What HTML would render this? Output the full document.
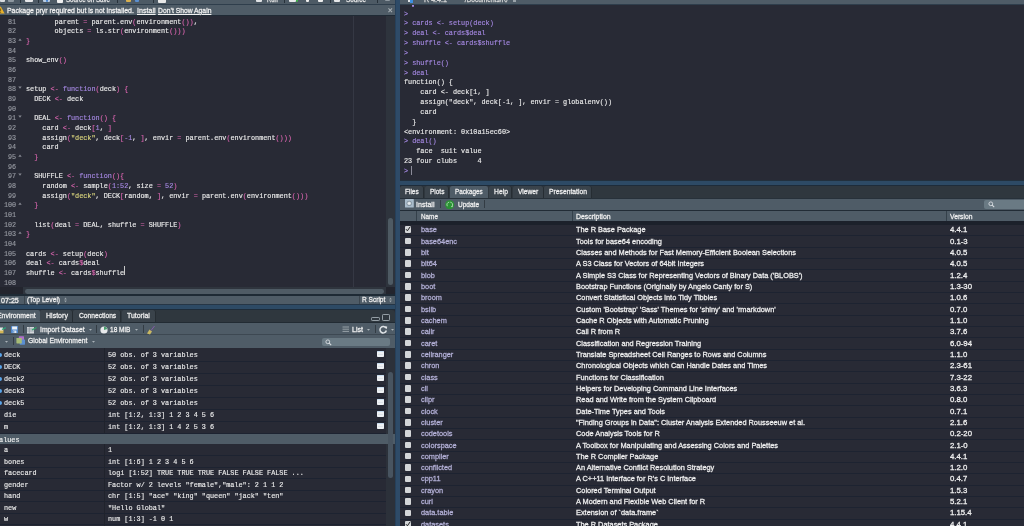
<!DOCTYPE html>
<html><head><meta charset="utf-8"><style>
html,body{margin:0;padding:0}
body{width:1024px;height:526px;overflow:hidden;position:relative;background:#282a35}
div{position:absolute}
.t{height:10px;line-height:10px;white-space:pre;transform-origin:0 0}
.s{-webkit-text-stroke:0.28px currentColor}
.m{-webkit-text-stroke:0.15px currentColor}
.m span{-webkit-text-stroke:0.15px currentColor}
</style></head><body>
<div id="w" style="left:0;top:0;width:1024px;height:526px;will-change:transform">
<div style="left:0.00px;top:0.00px;width:395.00px;height:3.70px;background:#4d5a65;"></div>
<div style="left:0.00px;top:3.70px;width:395.00px;height:1.40px;background:#2f3e4c;"></div>
<div style="left:0.00px;top:5.10px;width:395.00px;height:9.50px;background:#4f5c67;"></div>
<div style="left:0.00px;top:14.60px;width:395.00px;height:1.00px;background:#1f2a35;"></div>
<div style="left:0.00px;top:15.60px;width:395.00px;height:271.50px;background:#282a35;"></div>
<div style="left:353.00px;top:15.60px;width:1.00px;height:271.50px;background:#353844;"></div>
<div style="left:386.00px;top:15.60px;width:9.00px;height:271.50px;background:#2e343d;"></div>
<div style="left:388.00px;top:218.20px;width:5.40px;height:66.50px;background:#4e5a63;border-radius:3px"></div>
<div style="left:0.00px;top:287.10px;width:23.00px;height:7.40px;background:#23252e;"></div>
<div style="left:23.00px;top:287.10px;width:363.00px;height:7.40px;background:#2f353e;"></div>
<div style="left:24.50px;top:288.90px;width:359.00px;height:4.80px;background:#4f5b65;border-radius:2.4px"></div>
<div style="left:386.00px;top:287.10px;width:9.00px;height:7.40px;background:#23252e;"></div>
<div style="left:0.00px;top:294.00px;width:395.00px;height:2.00px;background:#1e2a35;"></div>
<div style="left:0.00px;top:296.00px;width:395.00px;height:8.00px;background:#4f5c67;"></div>
<div style="left:23.50px;top:296.00px;width:0.80px;height:8.00px;background:#3b454e;"></div>
<div style="left:358.50px;top:296.00px;width:0.80px;height:8.00px;background:#3b454e;"></div>
<div style="left:0.00px;top:303.95px;width:395.00px;height:1.00px;background:#263646;"></div>
<div style="left:0.00px;top:304.95px;width:395.00px;height:4.30px;background:#2d4a65;"></div>
<div style="left:0.00px;top:309.20px;width:395.00px;height:0.80px;background:#1e2c3a;"></div>
<div class="t m" style="left:7.80px;top:16.82px;font-family:'Liberation Mono', monospace;font-size:7.8px;color:#979aa2;transform:scaleX(0.8654);">81</div>
<div class="t m" style="left:25.70px;top:16.82px;font-family:'Liberation Mono', monospace;font-size:7.8px;color:#ececec;transform:scaleX(0.8739);">       parent <span style="color:#d865ae">=</span> parent.env<span style="color:#d865ae">(</span>environment<span style="color:#d865ae">(</span><span style="color:#d865ae">)</span><span style="color:#d865ae">)</span>,</div>
<div class="t m" style="left:7.80px;top:26.48px;font-family:'Liberation Mono', monospace;font-size:7.8px;color:#979aa2;transform:scaleX(0.8654);">82</div>
<div class="t m" style="left:25.70px;top:26.48px;font-family:'Liberation Mono', monospace;font-size:7.8px;color:#ececec;transform:scaleX(0.8739);">       objects <span style="color:#d865ae">=</span> ls.str<span style="color:#d865ae">(</span>environment<span style="color:#d865ae">(</span><span style="color:#d865ae">)</span><span style="color:#d865ae">)</span><span style="color:#d865ae">)</span></div>
<div class="t m" style="left:7.80px;top:36.14px;font-family:'Liberation Mono', monospace;font-size:7.8px;color:#979aa2;transform:scaleX(0.8654);">83</div>
<svg style="position:absolute;left:18px;top:38.12px" width="4" height="3" viewBox="0 0 4 3"><path d="M0.3 2.7 L2 0.4 L3.7 2.7Z" fill="#878a93"/></svg>
<div class="t m" style="left:25.70px;top:36.14px;font-family:'Liberation Mono', monospace;font-size:7.8px;color:#ececec;transform:scaleX(0.8739);"><span style="color:#d865ae">}</span></div>
<div class="t m" style="left:7.80px;top:45.80px;font-family:'Liberation Mono', monospace;font-size:7.8px;color:#979aa2;transform:scaleX(0.8654);">84</div>
<div class="t m" style="left:7.80px;top:55.46px;font-family:'Liberation Mono', monospace;font-size:7.8px;color:#979aa2;transform:scaleX(0.8654);">85</div>
<div class="t m" style="left:25.70px;top:55.46px;font-family:'Liberation Mono', monospace;font-size:7.8px;color:#ececec;transform:scaleX(0.8739);">show_env<span style="color:#d865ae">(</span><span style="color:#d865ae">)</span></div>
<div class="t m" style="left:7.80px;top:65.12px;font-family:'Liberation Mono', monospace;font-size:7.8px;color:#979aa2;transform:scaleX(0.8654);">86</div>
<div class="t m" style="left:7.80px;top:74.78px;font-family:'Liberation Mono', monospace;font-size:7.8px;color:#979aa2;transform:scaleX(0.8654);">87</div>
<div class="t m" style="left:7.80px;top:84.44px;font-family:'Liberation Mono', monospace;font-size:7.8px;color:#979aa2;transform:scaleX(0.8654);">88</div>
<svg style="position:absolute;left:18px;top:86.42px" width="4" height="3" viewBox="0 0 4 3"><path d="M0.3 0.4 L2 2.7 L3.7 0.4Z" fill="#878a93"/></svg>
<div class="t m" style="left:25.70px;top:84.44px;font-family:'Liberation Mono', monospace;font-size:7.8px;color:#ececec;transform:scaleX(0.8739);">setup <span style="color:#d865ae">&lt;-</span> <span style="color:#a588e2">function</span><span style="color:#d865ae">(</span>deck<span style="color:#d865ae">)</span> <span style="color:#d865ae">{</span></div>
<div class="t m" style="left:7.80px;top:94.10px;font-family:'Liberation Mono', monospace;font-size:7.8px;color:#979aa2;transform:scaleX(0.8654);">89</div>
<div class="t m" style="left:25.70px;top:94.10px;font-family:'Liberation Mono', monospace;font-size:7.8px;color:#ececec;transform:scaleX(0.8739);">  DECK <span style="color:#d865ae">&lt;-</span> deck</div>
<div class="t m" style="left:7.80px;top:103.76px;font-family:'Liberation Mono', monospace;font-size:7.8px;color:#979aa2;transform:scaleX(0.8654);">90</div>
<div class="t m" style="left:7.80px;top:113.42px;font-family:'Liberation Mono', monospace;font-size:7.8px;color:#979aa2;transform:scaleX(0.8654);">91</div>
<svg style="position:absolute;left:18px;top:115.40px" width="4" height="3" viewBox="0 0 4 3"><path d="M0.3 0.4 L2 2.7 L3.7 0.4Z" fill="#878a93"/></svg>
<div class="t m" style="left:25.70px;top:113.42px;font-family:'Liberation Mono', monospace;font-size:7.8px;color:#ececec;transform:scaleX(0.8739);">  DEAL <span style="color:#d865ae">&lt;-</span> <span style="color:#a588e2">function</span><span style="color:#d865ae">(</span><span style="color:#d865ae">)</span> <span style="color:#d865ae">{</span></div>
<div class="t m" style="left:7.80px;top:123.08px;font-family:'Liberation Mono', monospace;font-size:7.8px;color:#979aa2;transform:scaleX(0.8654);">92</div>
<div class="t m" style="left:25.70px;top:123.08px;font-family:'Liberation Mono', monospace;font-size:7.8px;color:#ececec;transform:scaleX(0.8739);">    card <span style="color:#d865ae">&lt;-</span> deck<span style="color:#d865ae">[</span><span style="color:#a588e2">1</span>, <span style="color:#d865ae">]</span></div>
<div class="t m" style="left:7.80px;top:132.74px;font-family:'Liberation Mono', monospace;font-size:7.8px;color:#979aa2;transform:scaleX(0.8654);">93</div>
<div class="t m" style="left:25.70px;top:132.74px;font-family:'Liberation Mono', monospace;font-size:7.8px;color:#ececec;transform:scaleX(0.8739);">    assign<span style="color:#d865ae">(</span><span style="color:#dcd77e">&quot;deck&quot;</span>, deck<span style="color:#d865ae">[</span><span style="color:#a588e2">-1</span>, <span style="color:#d865ae">]</span>, envir <span style="color:#d865ae">=</span> parent.env<span style="color:#d865ae">(</span>environment<span style="color:#d865ae">(</span><span style="color:#d865ae">)</span><span style="color:#d865ae">)</span><span style="color:#d865ae">)</span></div>
<div class="t m" style="left:7.80px;top:142.40px;font-family:'Liberation Mono', monospace;font-size:7.8px;color:#979aa2;transform:scaleX(0.8654);">94</div>
<div class="t m" style="left:25.70px;top:142.40px;font-family:'Liberation Mono', monospace;font-size:7.8px;color:#ececec;transform:scaleX(0.8739);">    card</div>
<div class="t m" style="left:7.80px;top:152.06px;font-family:'Liberation Mono', monospace;font-size:7.8px;color:#979aa2;transform:scaleX(0.8654);">95</div>
<svg style="position:absolute;left:18px;top:154.04px" width="4" height="3" viewBox="0 0 4 3"><path d="M0.3 2.7 L2 0.4 L3.7 2.7Z" fill="#878a93"/></svg>
<div class="t m" style="left:25.70px;top:152.06px;font-family:'Liberation Mono', monospace;font-size:7.8px;color:#ececec;transform:scaleX(0.8739);">  <span style="color:#d865ae">}</span></div>
<div class="t m" style="left:7.80px;top:161.72px;font-family:'Liberation Mono', monospace;font-size:7.8px;color:#979aa2;transform:scaleX(0.8654);">96</div>
<div class="t m" style="left:7.80px;top:171.38px;font-family:'Liberation Mono', monospace;font-size:7.8px;color:#979aa2;transform:scaleX(0.8654);">97</div>
<svg style="position:absolute;left:18px;top:173.36px" width="4" height="3" viewBox="0 0 4 3"><path d="M0.3 0.4 L2 2.7 L3.7 0.4Z" fill="#878a93"/></svg>
<div class="t m" style="left:25.70px;top:171.38px;font-family:'Liberation Mono', monospace;font-size:7.8px;color:#ececec;transform:scaleX(0.8739);">  SHUFFLE <span style="color:#d865ae">&lt;-</span> <span style="color:#a588e2">function</span><span style="color:#d865ae">(</span><span style="color:#d865ae">)</span><span style="color:#d865ae">{</span></div>
<div class="t m" style="left:7.80px;top:181.04px;font-family:'Liberation Mono', monospace;font-size:7.8px;color:#979aa2;transform:scaleX(0.8654);">98</div>
<div class="t m" style="left:25.70px;top:181.04px;font-family:'Liberation Mono', monospace;font-size:7.8px;color:#ececec;transform:scaleX(0.8739);">    random <span style="color:#d865ae">&lt;-</span> sample<span style="color:#d865ae">(</span><span style="color:#a588e2">1:52</span>, size <span style="color:#d865ae">=</span> <span style="color:#a588e2">52</span><span style="color:#d865ae">)</span></div>
<div class="t m" style="left:7.80px;top:190.70px;font-family:'Liberation Mono', monospace;font-size:7.8px;color:#979aa2;transform:scaleX(0.8654);">99</div>
<div class="t m" style="left:25.70px;top:190.70px;font-family:'Liberation Mono', monospace;font-size:7.8px;color:#ececec;transform:scaleX(0.8739);">    assign<span style="color:#d865ae">(</span><span style="color:#dcd77e">&quot;deck&quot;</span>, DECK<span style="color:#d865ae">[</span>random, <span style="color:#d865ae">]</span>, envir <span style="color:#d865ae">=</span> parent.env<span style="color:#d865ae">(</span>environment<span style="color:#d865ae">(</span><span style="color:#d865ae">)</span><span style="color:#d865ae">)</span><span style="color:#d865ae">)</span></div>
<div class="t m" style="left:3.75px;top:200.36px;font-family:'Liberation Mono', monospace;font-size:7.8px;color:#979aa2;transform:scaleX(0.8654);">100</div>
<svg style="position:absolute;left:18px;top:202.34px" width="4" height="3" viewBox="0 0 4 3"><path d="M0.3 2.7 L2 0.4 L3.7 2.7Z" fill="#878a93"/></svg>
<div class="t m" style="left:25.70px;top:200.36px;font-family:'Liberation Mono', monospace;font-size:7.8px;color:#ececec;transform:scaleX(0.8739);">  <span style="color:#d865ae">}</span></div>
<div class="t m" style="left:3.75px;top:210.02px;font-family:'Liberation Mono', monospace;font-size:7.8px;color:#979aa2;transform:scaleX(0.8654);">101</div>
<div class="t m" style="left:3.75px;top:219.68px;font-family:'Liberation Mono', monospace;font-size:7.8px;color:#979aa2;transform:scaleX(0.8654);">102</div>
<div class="t m" style="left:25.70px;top:219.68px;font-family:'Liberation Mono', monospace;font-size:7.8px;color:#ececec;transform:scaleX(0.8739);">  list<span style="color:#d865ae">(</span>deal <span style="color:#d865ae">=</span> DEAL, shuffle <span style="color:#d865ae">=</span> SHUFFLE<span style="color:#d865ae">)</span></div>
<div class="t m" style="left:3.75px;top:229.34px;font-family:'Liberation Mono', monospace;font-size:7.8px;color:#979aa2;transform:scaleX(0.8654);">103</div>
<svg style="position:absolute;left:18px;top:231.32px" width="4" height="3" viewBox="0 0 4 3"><path d="M0.3 2.7 L2 0.4 L3.7 2.7Z" fill="#878a93"/></svg>
<div class="t m" style="left:25.70px;top:229.34px;font-family:'Liberation Mono', monospace;font-size:7.8px;color:#ececec;transform:scaleX(0.8739);"><span style="color:#d865ae">}</span></div>
<div class="t m" style="left:3.75px;top:239.00px;font-family:'Liberation Mono', monospace;font-size:7.8px;color:#979aa2;transform:scaleX(0.8654);">104</div>
<div class="t m" style="left:3.75px;top:248.66px;font-family:'Liberation Mono', monospace;font-size:7.8px;color:#979aa2;transform:scaleX(0.8654);">105</div>
<div class="t m" style="left:25.70px;top:248.66px;font-family:'Liberation Mono', monospace;font-size:7.8px;color:#ececec;transform:scaleX(0.8739);">cards <span style="color:#d865ae">&lt;-</span> setup<span style="color:#d865ae">(</span>deck<span style="color:#d865ae">)</span></div>
<div class="t m" style="left:3.75px;top:258.32px;font-family:'Liberation Mono', monospace;font-size:7.8px;color:#979aa2;transform:scaleX(0.8654);">106</div>
<div class="t m" style="left:25.70px;top:258.32px;font-family:'Liberation Mono', monospace;font-size:7.8px;color:#ececec;transform:scaleX(0.8739);">deal <span style="color:#d865ae">&lt;-</span> cards<span style="color:#d865ae">$</span>deal</div>
<div class="t m" style="left:3.75px;top:267.98px;font-family:'Liberation Mono', monospace;font-size:7.8px;color:#979aa2;transform:scaleX(0.8654);">107</div>
<div class="t m" style="left:25.70px;top:267.98px;font-family:'Liberation Mono', monospace;font-size:7.8px;color:#ececec;transform:scaleX(0.8739);">shuffle <span style="color:#d865ae">&lt;-</span> cards<span style="color:#d865ae">$</span>shuffle</div>
<div class="t m" style="left:3.75px;top:277.64px;font-family:'Liberation Mono', monospace;font-size:7.8px;color:#979aa2;transform:scaleX(0.8654);">108</div>
<div style="left:123.60px;top:265.50px;width:0.70px;height:9.50px;background:#c8c8c8;"></div>
<svg style="position:absolute;left:-3px;top:6px" width="8" height="8" viewBox="0 0 8 8"><path d="M3.6 0.2 L7.6 7.5 L-0.4 7.5 Z" fill="#e9b22c"/><rect x="3.2" y="2.5" width="0.9" height="2.9" fill="#6b5212"/><rect x="3.2" y="6" width="0.9" height="0.8" fill="#6b5212"/></svg>
<div class="t s" style="left:7.00px;top:6.03px;font-family:'Liberation Sans', sans-serif;font-size:8px;color:#f0f0f0;transform:scaleX(0.8615);">Package pryr required but is not installed.</div>
<div class="t s" style="left:136.70px;top:6.03px;font-family:'Liberation Sans', sans-serif;font-size:8px;color:#f0f0f0;transform:scaleX(0.8900);text-decoration:underline">Install</div>
<div class="t s" style="left:157.80px;top:6.03px;font-family:'Liberation Sans', sans-serif;font-size:8px;color:#f0f0f0;transform:scaleX(0.8456);text-decoration:underline">Don’t Show Again</div>
<svg style="position:absolute;left:388px;top:8px" width="4.5" height="4.5" viewBox="0 0 4 4"><path d="M0.4 0.4 L3.6 3.6 M3.6 0.4 L0.4 3.6" stroke="#a7afb5" stroke-width="0.9"/></svg>
<div class="t s" style="left:66.00px;top:-4.87px;font-family:'Liberation Sans', sans-serif;font-size:8px;color:#e8e8e8;transform:scaleX(0.7729);">Source on Save</div>
<div class="t s" style="left:267.40px;top:-4.87px;font-family:'Liberation Sans', sans-serif;font-size:8px;color:#e8e8e8;transform:scaleX(0.7223);">Run</div>
<div class="t s" style="left:346.00px;top:-4.87px;font-family:'Liberation Sans', sans-serif;font-size:8px;color:#e8e8e8;transform:scaleX(0.7890);">Source</div>
<div style="left:0.00px;top:0.00px;width:5.00px;height:2.20px;background:#d9dcdf;border-radius:0 0 1px 1px"></div>
<div style="left:8.00px;top:0.00px;width:6.00px;height:1.60px;background:#8e98a0;border-radius:0 0 1px 1px"></div>
<div style="left:25.00px;top:0.00px;width:8.00px;height:2.40px;background:#e6e8ea;border-radius:0 0 1px 1px"></div>
<div style="left:43.00px;top:0.00px;width:7.00px;height:2.40px;background:#b9cde3;border-radius:0 0 1px 1px"></div>
<div style="left:46.00px;top:0.00px;width:2.00px;height:2.40px;background:#4a86d0;border-radius:0 0 1px 1px"></div>
<div style="left:57.00px;top:0.00px;width:6.00px;height:2.60px;background:#f0f0f0;border-radius:0 0 1px 1px"></div>
<div style="left:126.00px;top:0.00px;width:5.00px;height:1.80px;background:#d8b050;border-radius:0 0 1px 1px"></div>
<div style="left:135.00px;top:0.00px;width:4.00px;height:1.80px;background:#5a8fd0;border-radius:0 0 1px 1px"></div>
<div style="left:158.00px;top:0.00px;width:8.00px;height:2.60px;background:#e8e8e8;border-radius:0 0 1px 1px"></div>
<div style="left:255.70px;top:0.00px;width:6.30px;height:2.20px;background:#e0e3e6;border-radius:0 0 1px 1px"></div>
<div style="left:289.00px;top:0.00px;width:7.00px;height:2.40px;background:#e6e8ea;border-radius:0 0 1px 1px"></div>
<div style="left:296.00px;top:0.00px;width:2.00px;height:1.50px;background:#3fae4a;border-radius:0 0 1px 1px"></div>
<div style="left:306.00px;top:0.00px;width:3.00px;height:2.30px;background:#eeeeee;border-radius:0 0 1px 1px"></div>
<div style="left:318.00px;top:0.00px;width:5.00px;height:2.00px;background:#eeeeee;border-radius:0 0 1px 1px"></div>
<div style="left:334.00px;top:0.00px;width:6.00px;height:2.40px;background:#e6e8ea;border-radius:0 0 1px 1px"></div>
<div style="left:385.00px;top:0.00px;width:5.00px;height:1.40px;background:#8e98a0;border-radius:0 0 1px 1px"></div>
<div style="left:19.50px;top:0.00px;width:0.90px;height:2.80px;background:#27313a;"></div>
<div style="left:37.50px;top:0.00px;width:0.90px;height:2.80px;background:#27313a;"></div>
<div style="left:116.50px;top:0.00px;width:0.90px;height:2.80px;background:#27313a;"></div>
<div style="left:153.00px;top:0.00px;width:0.90px;height:2.80px;background:#27313a;"></div>
<div style="left:284.40px;top:0.00px;width:0.90px;height:2.80px;background:#27313a;"></div>
<div style="left:329.50px;top:0.00px;width:0.90px;height:2.80px;background:#27313a;"></div>
<div style="left:376.60px;top:0.00px;width:0.90px;height:2.80px;background:#27313a;"></div>
<div class="t s" style="left:0.60px;top:295.67px;font-family:'Liberation Sans', sans-serif;font-size:7.6px;color:#f0f0f0;transform:scaleX(0.9359);">07:25</div>
<div class="t s" style="left:27.40px;top:295.33px;font-family:'Liberation Sans', sans-serif;font-size:8px;color:#f0f0f0;transform:scaleX(0.8364);">(Top Level)</div>
<div class="t s" style="left:361.60px;top:295.33px;font-family:'Liberation Sans', sans-serif;font-size:8px;color:#f0f0f0;transform:scaleX(0.8190);">R Script</div>
<svg style="position:absolute;left:63.6px;top:297px" width="3" height="6" viewBox="0 0 3 6"><path d="M0.2 2.4 L1.5 0.6 L2.8 2.4Z M0.2 3.6 L1.5 5.4 L2.8 3.6Z" fill="#9aa3aa"/></svg>
<svg style="position:absolute;left:389.2px;top:297px" width="3" height="6" viewBox="0 0 3 6"><path d="M0.2 2.4 L1.5 0.6 L2.8 2.4Z M0.2 3.6 L1.5 5.4 L2.8 3.6Z" fill="#9aa3aa"/></svg>
<div style="left:0.00px;top:310.00px;width:395.00px;height:12.50px;background:#2f373e;border-top-right-radius:3px"></div>
<div style="left:-2.00px;top:310.10px;width:42.00px;height:12.40px;background:#4f5c67;border-radius:2px 2px 0 0;"></div>
<div class="t s" style="left:-3.50px;top:311.43px;font-family:'Liberation Sans', sans-serif;font-size:8px;color:#f0f0f0;transform:scaleX(0.8617);">Environment</div>
<div style="left:40.00px;top:310.10px;width:32.80px;height:12.40px;background:#3a434b;border-radius:2px 2px 0 0;box-shadow: inset -1px 0 0 #262d33"></div>
<div class="t s" style="left:45.90px;top:311.43px;font-family:'Liberation Sans', sans-serif;font-size:8px;color:#f0f0f0;transform:scaleX(0.8798);">History</div>
<div style="left:73.30px;top:310.10px;width:48.20px;height:12.40px;background:#3a434b;border-radius:2px 2px 0 0;box-shadow: inset -1px 0 0 #262d33"></div>
<div class="t s" style="left:78.50px;top:311.43px;font-family:'Liberation Sans', sans-serif;font-size:8px;color:#f0f0f0;transform:scaleX(0.8365);">Connections</div>
<div style="left:121.80px;top:310.10px;width:34.60px;height:12.40px;background:#3a434b;border-radius:2px 2px 0 0;box-shadow: inset -1px 0 0 #262d33"></div>
<div class="t s" style="left:127.20px;top:311.43px;font-family:'Liberation Sans', sans-serif;font-size:8px;color:#f0f0f0;transform:scaleX(0.8643);">Tutorial</div>
<div style="left:371.10px;top:316.80px;width:8.80px;height:4.00px;background:transparent;border:0.6px solid #959fa6;border-top-width:1.5px;border-radius:1.2px;box-sizing:border-box"></div>
<div style="left:382.00px;top:313.50px;width:7.90px;height:7.30px;background:transparent;border:0.6px solid #959fa6;border-top-width:1.5px;border-radius:1.2px;box-sizing:border-box"></div>
<div style="left:0.00px;top:322.20px;width:395.00px;height:0.90px;background:#222b33;"></div>
<div style="left:0.00px;top:323.10px;width:395.00px;height:11.00px;background:#4f5c67;"></div>
<div style="left:0.00px;top:334.10px;width:395.00px;height:0.90px;background:#3d4852;"></div>
<div style="left:0.00px;top:335.00px;width:395.00px;height:13.00px;background:#4f5c67;"></div>
<div style="left:0.00px;top:347.50px;width:395.00px;height:0.90px;background:#1d2430;"></div>
<div class="t s" style="left:39.80px;top:324.53px;font-family:'Liberation Sans', sans-serif;font-size:8px;color:#f0f0f0;transform:scaleX(0.8501);">Import Dataset</div>
<div class="t s" style="left:110.20px;top:324.53px;font-family:'Liberation Sans', sans-serif;font-size:8px;color:#f0f0f0;transform:scaleX(0.8153);">18 MiB</div>
<div class="t s" style="left:352.00px;top:324.53px;font-family:'Liberation Sans', sans-serif;font-size:8px;color:#f0f0f0;transform:scaleX(0.8836);">List</div>
<div class="t s" style="left:28.10px;top:335.93px;font-family:'Liberation Sans', sans-serif;font-size:8px;color:#f0f0f0;transform:scaleX(0.8455);">Global Environment</div>
<svg style="position:absolute;left:89px;top:329px" width="3" height="2" viewBox="0 0 3 2"><path d="M0 0 L3 0 L1.5 1.8Z" fill="#aab2b8"/></svg>
<svg style="position:absolute;left:135px;top:329px" width="3" height="2" viewBox="0 0 3 2"><path d="M0 0 L3 0 L1.5 1.8Z" fill="#aab2b8"/></svg>
<svg style="position:absolute;left:367px;top:329px" width="3" height="2" viewBox="0 0 3 2"><path d="M0 0 L3 0 L1.5 1.8Z" fill="#aab2b8"/></svg>
<svg style="position:absolute;left:4.7px;top:340.5px" width="3" height="2" viewBox="0 0 3 2"><path d="M0 0 L3 0 L1.5 1.8Z" fill="#aab2b8"/></svg>
<svg style="position:absolute;left:92.2px;top:340.5px" width="3" height="2" viewBox="0 0 3 2"><path d="M0 0 L3 0 L1.5 1.8Z" fill="#aab2b8"/></svg>
<svg style="position:absolute;left:390.5px;top:329px" width="3" height="2" viewBox="0 0 3 2"><path d="M0 0 L3 0 L1.5 1.8Z" fill="#aab2b8"/></svg>
<div style="left:22.70px;top:324.50px;width:0.80px;height:8.00px;background:#333c44;"></div>
<div style="left:96.00px;top:324.50px;width:0.80px;height:8.00px;background:#333c44;"></div>
<div style="left:142.50px;top:324.50px;width:0.80px;height:8.00px;background:#333c44;"></div>
<div style="left:374.50px;top:324.50px;width:0.80px;height:8.00px;background:#333c44;"></div>
<div style="left:12.50px;top:337.00px;width:0.80px;height:8.00px;background:#333c44;"></div>
<div style="left:322.00px;top:337.60px;width:67.80px;height:8.60px;background:#6a7a84;border-radius:2px"></div>
<svg style="position:absolute;left:324.5px;top:338.5px" width="7" height="7" viewBox="0 0 7 7"><circle cx="2.8" cy="2.8" r="1.9" stroke="#d9dee2" stroke-width="0.9" fill="none"/><path d="M4.2 4.2 L6.2 6.2" stroke="#d9dee2" stroke-width="1.1"/></svg>
<svg style="position:absolute;left:-1px;top:325.5px" width="8" height="8" viewBox="0 0 8 8"><rect x="0" y="2.5" width="4.5" height="4.8" fill="#d4b755"/><rect x="0.5" y="1.5" width="3.5" height="3" fill="#e8e8e8"/><path d="M3 3.5 L6.8 1.6" stroke="#27a37a" stroke-width="1.3"/></svg>
<svg style="position:absolute;left:10.9px;top:325.8px" width="7.5" height="7.5" viewBox="0 0 7.5 7.5"><rect x="0" y="0" width="7.2" height="7.2" rx="0.5" fill="#4d86cc"/><rect x="1.1" y="0.5" width="5" height="3" fill="#eef2f6"/><rect x="1.8" y="4.5" width="3.6" height="2.7" fill="#dfe7ef"/><rect x="2.3" y="5" width="1" height="1.8" fill="#4d86cc"/></svg>
<svg style="position:absolute;left:27.3px;top:325.5px" width="10" height="8" viewBox="0 0 10 8"><rect x="0" y="1" width="7" height="6.5" fill="#d2d6da"/><path d="M0 3 H7 M0 5 H7 M2.3 1 V7.5" stroke="#7e8a94" stroke-width="0.6"/><path d="M5 4 L9.5 1.5" stroke="#2fa86a" stroke-width="1.4"/></svg>
<svg style="position:absolute;left:100px;top:325.5px" width="8" height="8" viewBox="0 0 8 8"><circle cx="4" cy="4" r="3.6" fill="#e8eaec"/><path d="M4 4 L4 0.4 A3.6 3.6 0 0 1 7.4 3 Z" fill="#4aa070"/></svg>
<svg style="position:absolute;left:146px;top:324.5px" width="10" height="10" viewBox="0 0 10 10"><path d="M1 8.5 L3.5 4.5 L6 6.5 L4 9.5Z" fill="#c9b862"/><path d="M5 5.5 L8.5 1" stroke="#8a5ab0" stroke-width="0.9"/></svg>
<svg style="position:absolute;left:16.4px;top:336.4px" width="10" height="9" viewBox="0 0 10 9"><rect x="2.8" y="0.3" width="5.2" height="5" rx="0.6" fill="#b06fca"/><rect x="3.6" y="3.4" width="5.4" height="5.3" rx="0.6" fill="#5b8fd2"/><rect x="0.4" y="2" width="5.4" height="5.4" rx="0.6" fill="#a6bb76"/></svg>
<svg style="position:absolute;left:342px;top:325.5px" width="8" height="7" viewBox="0 0 8 7"><path d="M0.5 1 H7 M0.5 3.2 H7 M0.5 5.4 H7" stroke="#aab2b8" stroke-width="0.8"/></svg>
<svg style="position:absolute;left:378.5px;top:324.6px" width="9" height="9" viewBox="0 0 9 9"><path d="M7 3.2 A3.2 3.2 0 1 0 7.3 5.5" stroke="#dfe3e6" stroke-width="1.5" fill="none"/><path d="M5.4 1.2 L8.2 1.4 L7.8 4.2Z" fill="#dfe3e6"/></svg>
<div style="left:0.00px;top:348.40px;width:395.00px;height:178.00px;background:#282a35;"></div>
<div style="left:0.00px;top:361.10px;width:386.00px;height:0.90px;background:#1d2331;"></div>
<div style="left:-2.60px;top:352.80px;width:4.40px;height:4.40px;background:#5aa5ea;border-radius:50%"></div>
<div class="t m" style="left:4.00px;top:350.42px;font-family:'Liberation Mono', monospace;font-size:7.8px;color:#ececec;transform:scaleX(0.8718);">deck</div>
<div class="t m" style="left:107.50px;top:350.42px;font-family:'Liberation Mono', monospace;font-size:7.8px;color:#ececec;transform:scaleX(0.8718);">50 obs. of 3 variables</div>
<div style="left:376.90px;top:351.00px;width:7.40px;height:6.40px;background:#eef1f4;border-radius:0.8px;box-shadow:inset 0 0.8px 0 #bcd6ee"></div>
<div style="left:378.20px;top:354.20px;width:4.80px;height:0.50px;background:#dde3e8;"></div>
<div style="left:0.00px;top:373.10px;width:386.00px;height:0.90px;background:#1d2331;"></div>
<div style="left:-2.60px;top:364.80px;width:4.40px;height:4.40px;background:#5aa5ea;border-radius:50%"></div>
<div class="t m" style="left:4.00px;top:362.42px;font-family:'Liberation Mono', monospace;font-size:7.8px;color:#ececec;transform:scaleX(0.8718);">DECK</div>
<div class="t m" style="left:107.50px;top:362.42px;font-family:'Liberation Mono', monospace;font-size:7.8px;color:#ececec;transform:scaleX(0.8718);">52 obs. of 3 variables</div>
<div style="left:376.90px;top:363.00px;width:7.40px;height:6.40px;background:#eef1f4;border-radius:0.8px;box-shadow:inset 0 0.8px 0 #bcd6ee"></div>
<div style="left:378.20px;top:366.20px;width:4.80px;height:0.50px;background:#dde3e8;"></div>
<div style="left:0.00px;top:385.10px;width:386.00px;height:0.90px;background:#1d2331;"></div>
<div style="left:-2.60px;top:376.80px;width:4.40px;height:4.40px;background:#5aa5ea;border-radius:50%"></div>
<div class="t m" style="left:4.00px;top:374.42px;font-family:'Liberation Mono', monospace;font-size:7.8px;color:#ececec;transform:scaleX(0.8718);">deck2</div>
<div class="t m" style="left:107.50px;top:374.42px;font-family:'Liberation Mono', monospace;font-size:7.8px;color:#ececec;transform:scaleX(0.8718);">52 obs. of 3 variables</div>
<div style="left:376.90px;top:375.00px;width:7.40px;height:6.40px;background:#eef1f4;border-radius:0.8px;box-shadow:inset 0 0.8px 0 #bcd6ee"></div>
<div style="left:378.20px;top:378.20px;width:4.80px;height:0.50px;background:#dde3e8;"></div>
<div style="left:0.00px;top:397.10px;width:386.00px;height:0.90px;background:#1d2331;"></div>
<div style="left:-2.60px;top:388.80px;width:4.40px;height:4.40px;background:#5aa5ea;border-radius:50%"></div>
<div class="t m" style="left:4.00px;top:386.42px;font-family:'Liberation Mono', monospace;font-size:7.8px;color:#ececec;transform:scaleX(0.8718);">deck3</div>
<div class="t m" style="left:107.50px;top:386.42px;font-family:'Liberation Mono', monospace;font-size:7.8px;color:#ececec;transform:scaleX(0.8718);">52 obs. of 3 variables</div>
<div style="left:376.90px;top:387.00px;width:7.40px;height:6.40px;background:#eef1f4;border-radius:0.8px;box-shadow:inset 0 0.8px 0 #bcd6ee"></div>
<div style="left:378.20px;top:390.20px;width:4.80px;height:0.50px;background:#dde3e8;"></div>
<div style="left:0.00px;top:409.10px;width:386.00px;height:0.90px;background:#1d2331;"></div>
<div style="left:-2.60px;top:400.80px;width:4.40px;height:4.40px;background:#5aa5ea;border-radius:50%"></div>
<div class="t m" style="left:4.00px;top:398.42px;font-family:'Liberation Mono', monospace;font-size:7.8px;color:#ececec;transform:scaleX(0.8718);">deck5</div>
<div class="t m" style="left:107.50px;top:398.42px;font-family:'Liberation Mono', monospace;font-size:7.8px;color:#ececec;transform:scaleX(0.8718);">52 obs. of 3 variables</div>
<div style="left:376.90px;top:399.00px;width:7.40px;height:6.40px;background:#eef1f4;border-radius:0.8px;box-shadow:inset 0 0.8px 0 #bcd6ee"></div>
<div style="left:378.20px;top:402.20px;width:4.80px;height:0.50px;background:#dde3e8;"></div>
<div style="left:0.00px;top:421.10px;width:386.00px;height:0.90px;background:#1d2331;"></div>
<div class="t m" style="left:4.00px;top:410.42px;font-family:'Liberation Mono', monospace;font-size:7.8px;color:#ececec;transform:scaleX(0.8718);">die</div>
<div class="t m" style="left:107.50px;top:410.42px;font-family:'Liberation Mono', monospace;font-size:7.8px;color:#ececec;transform:scaleX(0.8718);">int [1:2, 1:3] 1 2 3 4 5 6</div>
<div style="left:376.90px;top:411.00px;width:7.40px;height:6.40px;background:#eef1f4;border-radius:0.8px;box-shadow:inset 0 0.8px 0 #bcd6ee"></div>
<div style="left:378.20px;top:414.20px;width:4.80px;height:0.50px;background:#dde3e8;"></div>
<div class="t m" style="left:4.00px;top:422.42px;font-family:'Liberation Mono', monospace;font-size:7.8px;color:#ececec;transform:scaleX(0.8718);">m</div>
<div class="t m" style="left:107.50px;top:422.42px;font-family:'Liberation Mono', monospace;font-size:7.8px;color:#ececec;transform:scaleX(0.8718);">int [1:2, 1:3] 1 4 2 5 3 6</div>
<div style="left:376.90px;top:423.00px;width:7.40px;height:6.40px;background:#eef1f4;border-radius:0.8px;box-shadow:inset 0 0.8px 0 #bcd6ee"></div>
<div style="left:378.20px;top:426.20px;width:4.80px;height:0.50px;background:#dde3e8;"></div>
<div style="left:0.00px;top:432.90px;width:386.00px;height:0.90px;background:#1d2331;"></div>
<div style="left:0.00px;top:433.60px;width:395.00px;height:10.40px;background:#4f5c67;"></div>
<div class="t m" style="left:-5.30px;top:435.02px;font-family:'Liberation Mono', monospace;font-size:7.8px;color:#f0f0f0;transform:scaleX(0.8718);">Values</div>
<div style="left:0.00px;top:455.10px;width:386.00px;height:0.90px;background:#1d2331;"></div>
<div class="t m" style="left:4.00px;top:445.12px;font-family:'Liberation Mono', monospace;font-size:7.8px;color:#ececec;transform:scaleX(0.8718);">a</div>
<div class="t m" style="left:107.50px;top:445.12px;font-family:'Liberation Mono', monospace;font-size:7.8px;color:#ececec;transform:scaleX(0.8718);">1</div>
<div style="left:0.00px;top:466.62px;width:386.00px;height:0.90px;background:#1d2331;"></div>
<div class="t m" style="left:4.00px;top:456.64px;font-family:'Liberation Mono', monospace;font-size:7.8px;color:#ececec;transform:scaleX(0.8718);">bones</div>
<div class="t m" style="left:107.50px;top:456.64px;font-family:'Liberation Mono', monospace;font-size:7.8px;color:#ececec;transform:scaleX(0.8718);">int [1:6] 1 2 3 4 5 6</div>
<div style="left:0.00px;top:478.14px;width:386.00px;height:0.90px;background:#1d2331;"></div>
<div class="t m" style="left:4.00px;top:468.16px;font-family:'Liberation Mono', monospace;font-size:7.8px;color:#ececec;transform:scaleX(0.8718);">facecard</div>
<div class="t m" style="left:107.50px;top:468.16px;font-family:'Liberation Mono', monospace;font-size:7.8px;color:#ececec;transform:scaleX(0.8718);">logi [1:52] TRUE TRUE TRUE FALSE FALSE FALSE ...</div>
<div style="left:0.00px;top:489.66px;width:386.00px;height:0.90px;background:#1d2331;"></div>
<div class="t m" style="left:4.00px;top:479.68px;font-family:'Liberation Mono', monospace;font-size:7.8px;color:#ececec;transform:scaleX(0.8718);">gender</div>
<div class="t m" style="left:107.50px;top:479.68px;font-family:'Liberation Mono', monospace;font-size:7.8px;color:#ececec;transform:scaleX(0.8718);">Factor w/ 2 levels &quot;female&quot;,&quot;male&quot;: 2 1 1 2</div>
<div style="left:0.00px;top:501.18px;width:386.00px;height:0.90px;background:#1d2331;"></div>
<div class="t m" style="left:4.00px;top:491.20px;font-family:'Liberation Mono', monospace;font-size:7.8px;color:#ececec;transform:scaleX(0.8718);">hand</div>
<div class="t m" style="left:107.50px;top:491.20px;font-family:'Liberation Mono', monospace;font-size:7.8px;color:#ececec;transform:scaleX(0.8718);">chr [1:5] &quot;ace&quot; &quot;king&quot; &quot;queen&quot; &quot;jack&quot; &quot;ten&quot;</div>
<div style="left:0.00px;top:512.70px;width:386.00px;height:0.90px;background:#1d2331;"></div>
<div class="t m" style="left:4.00px;top:502.72px;font-family:'Liberation Mono', monospace;font-size:7.8px;color:#ececec;transform:scaleX(0.8718);">new</div>
<div class="t m" style="left:107.50px;top:502.72px;font-family:'Liberation Mono', monospace;font-size:7.8px;color:#ececec;transform:scaleX(0.8718);">&quot;Hello Global&quot;</div>
<div style="left:0.00px;top:524.22px;width:386.00px;height:0.90px;background:#1d2331;"></div>
<div class="t m" style="left:4.00px;top:514.24px;font-family:'Liberation Mono', monospace;font-size:7.8px;color:#ececec;transform:scaleX(0.8718);">w</div>
<div class="t m" style="left:107.50px;top:514.24px;font-family:'Liberation Mono', monospace;font-size:7.8px;color:#ececec;transform:scaleX(0.8718);">num [1:3] -1 0 1</div>
<div style="left:104.00px;top:348.40px;width:0.80px;height:84.60px;background:#20232c;"></div>
<div style="left:104.00px;top:444.00px;width:0.80px;height:82.00px;background:#20232c;"></div>
<div style="left:386.00px;top:348.40px;width:9.00px;height:85.20px;background:#2c313a;"></div>
<div style="left:386.00px;top:444.00px;width:9.00px;height:82.00px;background:#2c313a;"></div>
<div style="left:388.00px;top:371.60px;width:5.30px;height:106.00px;background:#485460;border-radius:3px"></div>
<div style="left:395.00px;top:0.00px;width:5.00px;height:526.00px;background:#2e4b68;"></div>
<div style="left:395.00px;top:0.00px;width:0.70px;height:526.00px;background:#26405a;"></div>
<div style="left:400.00px;top:0.00px;width:624.00px;height:3.70px;background:#4f5c67;"></div>
<div style="left:400.00px;top:3.70px;width:624.00px;height:1.30px;background:#2f3e4c;"></div>
<div style="left:400.00px;top:5.00px;width:624.00px;height:175.10px;background:#282a35;"></div>
<div style="left:408.00px;top:0.00px;width:3.00px;height:2.20px;background:#dfe3e6;"></div>
<div style="left:409.50px;top:0.00px;width:3.00px;height:2.50px;background:#3d8fe0;"></div>
<div class="t s" style="left:424.00px;top:-4.87px;font-family:'Liberation Sans', sans-serif;font-size:8px;color:#d8d8d8;transform:scaleX(0.8917);">R 4.4.1</div>
<div class="t s" style="left:461.00px;top:-4.87px;font-family:'Liberation Sans', sans-serif;font-size:8px;color:#d8d8d8;transform:scaleX(0.8163);">~/Documents/R/</div>
<div style="left:513.00px;top:0.00px;width:3.00px;height:1.50px;background:#9aa3aa;"></div>
<div style="left:412.30px;top:5.00px;width:1.80px;height:1.80px;background:#a588e2;border-radius:0 0 1px 1px"></div>
<div class="t m" style="left:403.60px;top:8.52px;font-family:'Liberation Mono', monospace;font-size:7.8px;color:#ececec;transform:scaleX(0.8718);"><span style="color:#a588e2">&gt;</span></div>
<div class="t m" style="left:403.60px;top:18.36px;font-family:'Liberation Mono', monospace;font-size:7.8px;color:#ececec;transform:scaleX(0.8718);"><span style="color:#a588e2">&gt; cards &lt;- setup(deck)</span></div>
<div class="t m" style="left:403.60px;top:28.20px;font-family:'Liberation Mono', monospace;font-size:7.8px;color:#ececec;transform:scaleX(0.8718);"><span style="color:#a588e2">&gt; deal &lt;- cards$deal</span></div>
<div class="t m" style="left:403.60px;top:38.04px;font-family:'Liberation Mono', monospace;font-size:7.8px;color:#ececec;transform:scaleX(0.8718);"><span style="color:#a588e2">&gt; shuffle &lt;- cards$shuffle</span></div>
<div class="t m" style="left:403.60px;top:47.88px;font-family:'Liberation Mono', monospace;font-size:7.8px;color:#ececec;transform:scaleX(0.8718);"><span style="color:#a588e2">&gt;</span></div>
<div class="t m" style="left:403.60px;top:57.72px;font-family:'Liberation Mono', monospace;font-size:7.8px;color:#ececec;transform:scaleX(0.8718);"><span style="color:#a588e2">&gt; shuffle()</span></div>
<div class="t m" style="left:403.60px;top:67.56px;font-family:'Liberation Mono', monospace;font-size:7.8px;color:#ececec;transform:scaleX(0.8718);"><span style="color:#a588e2">&gt; deal</span></div>
<div class="t m" style="left:403.60px;top:77.40px;font-family:'Liberation Mono', monospace;font-size:7.8px;color:#ececec;transform:scaleX(0.8718);"><span style="color:#ececec">function() {</span></div>
<div class="t m" style="left:403.60px;top:87.24px;font-family:'Liberation Mono', monospace;font-size:7.8px;color:#ececec;transform:scaleX(0.8718);"><span style="color:#ececec">    card &lt;- deck[1, ]</span></div>
<div class="t m" style="left:403.60px;top:97.08px;font-family:'Liberation Mono', monospace;font-size:7.8px;color:#ececec;transform:scaleX(0.8718);"><span style="color:#ececec">    assign(&quot;deck&quot;, deck[-1, ], envir = globalenv())</span></div>
<div class="t m" style="left:403.60px;top:106.92px;font-family:'Liberation Mono', monospace;font-size:7.8px;color:#ececec;transform:scaleX(0.8718);"><span style="color:#ececec">    card</span></div>
<div class="t m" style="left:403.60px;top:116.76px;font-family:'Liberation Mono', monospace;font-size:7.8px;color:#ececec;transform:scaleX(0.8718);"><span style="color:#ececec">  }</span></div>
<div class="t m" style="left:403.60px;top:126.60px;font-family:'Liberation Mono', monospace;font-size:7.8px;color:#ececec;transform:scaleX(0.8718);"><span style="color:#ececec">&lt;environment: 0x10a15ec60&gt;</span></div>
<div class="t m" style="left:403.60px;top:136.44px;font-family:'Liberation Mono', monospace;font-size:7.8px;color:#ececec;transform:scaleX(0.8718);"><span style="color:#a588e2">&gt; deal()</span></div>
<div class="t m" style="left:403.60px;top:146.28px;font-family:'Liberation Mono', monospace;font-size:7.8px;color:#ececec;transform:scaleX(0.8718);"><span style="color:#ececec">   face  suit value</span></div>
<div class="t m" style="left:403.60px;top:156.12px;font-family:'Liberation Mono', monospace;font-size:7.8px;color:#ececec;transform:scaleX(0.8718);"><span style="color:#ececec">23 four clubs     4</span></div>
<div class="t m" style="left:403.60px;top:165.96px;font-family:'Liberation Mono', monospace;font-size:7.8px;color:#ececec;transform:scaleX(0.8718);"><span style="color:#a588e2">&gt; </span></div>
<div style="left:411.40px;top:165.90px;width:0.70px;height:9.50px;background:#8c8c9a;"></div>
<div style="left:400.00px;top:180.10px;width:624.00px;height:0.90px;background:#22303d;"></div>
<div style="left:400.00px;top:181.00px;width:624.00px;height:3.50px;background:#2d4a65;"></div>
<div style="left:400.00px;top:184.50px;width:624.00px;height:1.00px;background:#1e2c3a;"></div>
<div style="left:400.00px;top:185.50px;width:624.00px;height:12.50px;background:#2f373e;border-top-left-radius:3px"></div>
<div style="left:399.80px;top:185.60px;width:24.40px;height:12.40px;background:#3a434b;border-radius:2px 2px 0 0;box-shadow: inset -1px 0 0 #262d33"></div>
<div class="t s" style="left:405.20px;top:186.83px;font-family:'Liberation Sans', sans-serif;font-size:8px;color:#f0f0f0;transform:scaleX(0.8111);">Files</div>
<div style="left:424.60px;top:185.60px;width:24.80px;height:12.40px;background:#3a434b;border-radius:2px 2px 0 0;box-shadow: inset -1px 0 0 #262d33"></div>
<div class="t s" style="left:429.90px;top:186.83px;font-family:'Liberation Sans', sans-serif;font-size:8px;color:#f0f0f0;transform:scaleX(0.8097);">Plots</div>
<div style="left:450.10px;top:185.60px;width:38.30px;height:12.40px;background:#4f5c67;border-radius:2px 2px 0 0;"></div>
<div class="t s" style="left:454.90px;top:186.83px;font-family:'Liberation Sans', sans-serif;font-size:8px;color:#f0f0f0;transform:scaleX(0.7884);">Packages</div>
<div style="left:488.60px;top:185.60px;width:23.70px;height:12.40px;background:#3a434b;border-radius:2px 2px 0 0;box-shadow: inset -1px 0 0 #262d33"></div>
<div class="t s" style="left:493.50px;top:186.83px;font-family:'Liberation Sans', sans-serif;font-size:8px;color:#f0f0f0;transform:scaleX(0.8448);">Help</div>
<div style="left:512.50px;top:185.60px;width:31.80px;height:12.40px;background:#3a434b;border-radius:2px 2px 0 0;box-shadow: inset -1px 0 0 #262d33"></div>
<div class="t s" style="left:518.20px;top:186.83px;font-family:'Liberation Sans', sans-serif;font-size:8px;color:#f0f0f0;transform:scaleX(0.8351);">Viewer</div>
<div style="left:544.40px;top:185.60px;width:47.70px;height:12.40px;background:#3a434b;border-radius:2px 2px 0 0;box-shadow: inset -1px 0 0 #262d33"></div>
<div class="t s" style="left:548.90px;top:186.83px;font-family:'Liberation Sans', sans-serif;font-size:8px;color:#f0f0f0;transform:scaleX(0.8438);">Presentation</div>
<div style="left:400.00px;top:197.70px;width:624.00px;height:0.80px;background:#27313a;"></div>
<div style="left:400.00px;top:198.50px;width:624.00px;height:11.00px;background:#4f5c67;"></div>
<div style="left:400.00px;top:209.50px;width:624.00px;height:1.40px;background:#222c36;"></div>
<div style="left:400.00px;top:210.70px;width:624.00px;height:10.30px;background:#4f5c67;"></div>
<div style="left:416.30px;top:210.70px;width:0.90px;height:10.30px;background:#34404a;"></div>
<div style="left:572.30px;top:210.70px;width:0.90px;height:10.30px;background:#34404a;"></div>
<div style="left:946.20px;top:210.70px;width:0.90px;height:10.30px;background:#34404a;"></div>
<div class="t s" style="left:420.80px;top:212.23px;font-family:'Liberation Sans', sans-serif;font-size:8px;color:#f0f0f0;transform:scaleX(0.7919);">Name</div>
<div class="t s" style="left:576.40px;top:212.13px;font-family:'Liberation Sans', sans-serif;font-size:8px;color:#f0f0f0;transform:scaleX(0.8647);">Description</div>
<div class="t s" style="left:950.00px;top:212.13px;font-family:'Liberation Sans', sans-serif;font-size:8px;color:#f0f0f0;transform:scaleX(0.8432);">Version</div>
<div style="left:400.00px;top:221.00px;width:624.00px;height:3.50px;background:#1c212b;"></div>
<div style="left:400.00px;top:224.50px;width:624.00px;height:302.00px;background:#282a35;"></div>
<div class="t s" style="left:415.90px;top:199.63px;font-family:'Liberation Sans', sans-serif;font-size:8px;color:#f0f0f0;transform:scaleX(0.8852);">Install</div>
<div class="t s" style="left:457.50px;top:199.63px;font-family:'Liberation Sans', sans-serif;font-size:8px;color:#f0f0f0;transform:scaleX(0.8140);">Update</div>
<div style="left:440.20px;top:200.00px;width:0.80px;height:8.00px;background:#333c44;"></div>
<div style="left:483.60px;top:200.00px;width:0.80px;height:8.00px;background:#333c44;"></div>
<svg style="position:absolute;left:404.6px;top:199.3px" width="9" height="9" viewBox="0 0 9 9"><rect x="0" y="0" width="8.8" height="8.6" rx="0.6" fill="#a9bccb"/><circle cx="4.2" cy="4.3" r="2.6" fill="#7d8c98"/><circle cx="4.2" cy="4.3" r="1.9" fill="#c9d3da"/><path d="M4.2 3.1 V5.5 M3 4.3 H5.4" stroke="#eef2f5" stroke-width="0.8"/></svg>
<svg style="position:absolute;left:445px;top:199.6px" width="9.5" height="9.5" viewBox="0 0 9.5 9.5"><circle cx="4.7" cy="4.7" r="4.5" fill="#2a9234"/><path d="M2.4 6.2 A2.5 2.5 0 0 1 4.2 2.2 M5.3 2.2 A2.5 2.5 0 0 1 7.1 6.2" stroke="#bfe3c2" stroke-width="0.8" fill="none"/><circle cx="7" cy="6.6" r="0.7" fill="#e6f3e6"/></svg>
<div style="left:984.00px;top:200.00px;width:40.00px;height:9.40px;background:#6a7a84;border-radius:2px 0 0 2px"></div>
<svg style="position:absolute;left:987.5px;top:201px" width="7" height="7" viewBox="0 0 7 7"><circle cx="2.8" cy="2.8" r="1.9" stroke="#d9dee2" stroke-width="0.9" fill="none"/><path d="M4.2 4.2 L6.2 6.2" stroke="#d9dee2" stroke-width="1.1"/></svg>
<div style="left:400.00px;top:235.30px;width:624.00px;height:1.00px;background:#1d2331;"></div>
<div style="left:404.50px;top:226.30px;width:6.60px;height:6.60px;background:#d4d6d8;border-radius:1px"></div>
<svg style="position:absolute;left:405px;top:226.30px" width="6" height="6" viewBox="0 0 6 6"><path d="M1 3.2 L2.4 4.8 L5.2 0.8" stroke="#202020" stroke-width="1" fill="none"/></svg>
<div class="t s" style="left:420.80px;top:225.23px;font-family:'Liberation Sans', sans-serif;font-size:8px;color:#b4b1d8;transform:scaleX(0.9200);">base</div>
<div class="t s" style="left:576.00px;top:225.23px;font-family:'Liberation Sans', sans-serif;font-size:8px;color:#f0f0f0;transform:scaleX(0.9200);">The R Base Package</div>
<div class="t s" style="left:950.00px;top:225.23px;font-family:'Liberation Sans', sans-serif;font-size:8px;color:#f0f0f0;transform:scaleX(0.9700);">4.4.1</div>
<div style="left:400.00px;top:246.63px;width:624.00px;height:1.00px;background:#1d2331;"></div>
<div style="left:404.50px;top:237.63px;width:6.60px;height:6.60px;background:#d4d6d8;border-radius:1px"></div>
<div class="t s" style="left:420.80px;top:236.56px;font-family:'Liberation Sans', sans-serif;font-size:8px;color:#b4b1d8;transform:scaleX(0.9200);">base64enc</div>
<div class="t s" style="left:576.00px;top:236.56px;font-family:'Liberation Sans', sans-serif;font-size:8px;color:#f0f0f0;transform:scaleX(0.9200);">Tools for base64 encoding</div>
<div class="t s" style="left:950.00px;top:236.56px;font-family:'Liberation Sans', sans-serif;font-size:8px;color:#f0f0f0;transform:scaleX(0.9700);">0.1-3</div>
<div style="left:400.00px;top:257.96px;width:624.00px;height:1.00px;background:#1d2331;"></div>
<div style="left:404.50px;top:248.96px;width:6.60px;height:6.60px;background:#d4d6d8;border-radius:1px"></div>
<div class="t s" style="left:420.80px;top:247.89px;font-family:'Liberation Sans', sans-serif;font-size:8px;color:#b4b1d8;transform:scaleX(0.9200);">bit</div>
<div class="t s" style="left:576.00px;top:247.89px;font-family:'Liberation Sans', sans-serif;font-size:8px;color:#f0f0f0;transform:scaleX(0.9200);">Classes and Methods for Fast Memory-Efficient Boolean Selections</div>
<div class="t s" style="left:950.00px;top:247.89px;font-family:'Liberation Sans', sans-serif;font-size:8px;color:#f0f0f0;transform:scaleX(0.9700);">4.0.5</div>
<div style="left:400.00px;top:269.29px;width:624.00px;height:1.00px;background:#1d2331;"></div>
<div style="left:404.50px;top:260.29px;width:6.60px;height:6.60px;background:#d4d6d8;border-radius:1px"></div>
<div class="t s" style="left:420.80px;top:259.22px;font-family:'Liberation Sans', sans-serif;font-size:8px;color:#b4b1d8;transform:scaleX(0.9200);">bit64</div>
<div class="t s" style="left:576.00px;top:259.22px;font-family:'Liberation Sans', sans-serif;font-size:8px;color:#f0f0f0;transform:scaleX(0.9200);">A S3 Class for Vectors of 64bit Integers</div>
<div class="t s" style="left:950.00px;top:259.22px;font-family:'Liberation Sans', sans-serif;font-size:8px;color:#f0f0f0;transform:scaleX(0.9700);">4.0.5</div>
<div style="left:400.00px;top:280.62px;width:624.00px;height:1.00px;background:#1d2331;"></div>
<div style="left:404.50px;top:271.62px;width:6.60px;height:6.60px;background:#d4d6d8;border-radius:1px"></div>
<div class="t s" style="left:420.80px;top:270.55px;font-family:'Liberation Sans', sans-serif;font-size:8px;color:#b4b1d8;transform:scaleX(0.9200);">blob</div>
<div class="t s" style="left:576.00px;top:270.55px;font-family:'Liberation Sans', sans-serif;font-size:8px;color:#f0f0f0;transform:scaleX(0.9200);">A Simple S3 Class for Representing Vectors of Binary Data (&#x27;BLOBS&#x27;)</div>
<div class="t s" style="left:950.00px;top:270.55px;font-family:'Liberation Sans', sans-serif;font-size:8px;color:#f0f0f0;transform:scaleX(0.9700);">1.2.4</div>
<div style="left:400.00px;top:291.95px;width:624.00px;height:1.00px;background:#1d2331;"></div>
<div style="left:404.50px;top:282.95px;width:6.60px;height:6.60px;background:#d4d6d8;border-radius:1px"></div>
<div class="t s" style="left:420.80px;top:281.88px;font-family:'Liberation Sans', sans-serif;font-size:8px;color:#b4b1d8;transform:scaleX(0.9200);">boot</div>
<div class="t s" style="left:576.00px;top:281.88px;font-family:'Liberation Sans', sans-serif;font-size:8px;color:#f0f0f0;transform:scaleX(0.9200);">Bootstrap Functions (Originally by Angelo Canty for S)</div>
<div class="t s" style="left:950.00px;top:281.88px;font-family:'Liberation Sans', sans-serif;font-size:8px;color:#f0f0f0;transform:scaleX(0.9700);">1.3-30</div>
<div style="left:400.00px;top:303.28px;width:624.00px;height:1.00px;background:#1d2331;"></div>
<div style="left:404.50px;top:294.28px;width:6.60px;height:6.60px;background:#d4d6d8;border-radius:1px"></div>
<div class="t s" style="left:420.80px;top:293.21px;font-family:'Liberation Sans', sans-serif;font-size:8px;color:#b4b1d8;transform:scaleX(0.9200);">broom</div>
<div class="t s" style="left:576.00px;top:293.21px;font-family:'Liberation Sans', sans-serif;font-size:8px;color:#f0f0f0;transform:scaleX(0.9200);">Convert Statistical Objects into Tidy Tibbles</div>
<div class="t s" style="left:950.00px;top:293.21px;font-family:'Liberation Sans', sans-serif;font-size:8px;color:#f0f0f0;transform:scaleX(0.9700);">1.0.6</div>
<div style="left:400.00px;top:314.61px;width:624.00px;height:1.00px;background:#1d2331;"></div>
<div style="left:404.50px;top:305.61px;width:6.60px;height:6.60px;background:#d4d6d8;border-radius:1px"></div>
<div class="t s" style="left:420.80px;top:304.54px;font-family:'Liberation Sans', sans-serif;font-size:8px;color:#b4b1d8;transform:scaleX(0.9200);">bslib</div>
<div class="t s" style="left:576.00px;top:304.54px;font-family:'Liberation Sans', sans-serif;font-size:8px;color:#f0f0f0;transform:scaleX(0.9200);">Custom &#x27;Bootstrap&#x27; &#x27;Sass&#x27; Themes for &#x27;shiny&#x27; and &#x27;rmarkdown&#x27;</div>
<div class="t s" style="left:950.00px;top:304.54px;font-family:'Liberation Sans', sans-serif;font-size:8px;color:#f0f0f0;transform:scaleX(0.9700);">0.7.0</div>
<div style="left:400.00px;top:325.94px;width:624.00px;height:1.00px;background:#1d2331;"></div>
<div style="left:404.50px;top:316.94px;width:6.60px;height:6.60px;background:#d4d6d8;border-radius:1px"></div>
<div class="t s" style="left:420.80px;top:315.87px;font-family:'Liberation Sans', sans-serif;font-size:8px;color:#b4b1d8;transform:scaleX(0.9200);">cachem</div>
<div class="t s" style="left:576.00px;top:315.87px;font-family:'Liberation Sans', sans-serif;font-size:8px;color:#f0f0f0;transform:scaleX(0.9200);">Cache R Objects with Automatic Pruning</div>
<div class="t s" style="left:950.00px;top:315.87px;font-family:'Liberation Sans', sans-serif;font-size:8px;color:#f0f0f0;transform:scaleX(0.9700);">1.1.0</div>
<div style="left:400.00px;top:337.27px;width:624.00px;height:1.00px;background:#1d2331;"></div>
<div style="left:404.50px;top:328.27px;width:6.60px;height:6.60px;background:#d4d6d8;border-radius:1px"></div>
<div class="t s" style="left:420.80px;top:327.20px;font-family:'Liberation Sans', sans-serif;font-size:8px;color:#b4b1d8;transform:scaleX(0.9200);">callr</div>
<div class="t s" style="left:576.00px;top:327.20px;font-family:'Liberation Sans', sans-serif;font-size:8px;color:#f0f0f0;transform:scaleX(0.9200);">Call R from R</div>
<div class="t s" style="left:950.00px;top:327.20px;font-family:'Liberation Sans', sans-serif;font-size:8px;color:#f0f0f0;transform:scaleX(0.9700);">3.7.6</div>
<div style="left:400.00px;top:348.60px;width:624.00px;height:1.00px;background:#1d2331;"></div>
<div style="left:404.50px;top:339.60px;width:6.60px;height:6.60px;background:#d4d6d8;border-radius:1px"></div>
<div class="t s" style="left:420.80px;top:338.53px;font-family:'Liberation Sans', sans-serif;font-size:8px;color:#b4b1d8;transform:scaleX(0.9200);">caret</div>
<div class="t s" style="left:576.00px;top:338.53px;font-family:'Liberation Sans', sans-serif;font-size:8px;color:#f0f0f0;transform:scaleX(0.9200);">Classification and Regression Training</div>
<div class="t s" style="left:950.00px;top:338.53px;font-family:'Liberation Sans', sans-serif;font-size:8px;color:#f0f0f0;transform:scaleX(0.9700);">6.0-94</div>
<div style="left:400.00px;top:359.93px;width:624.00px;height:1.00px;background:#1d2331;"></div>
<div style="left:404.50px;top:350.93px;width:6.60px;height:6.60px;background:#d4d6d8;border-radius:1px"></div>
<div class="t s" style="left:420.80px;top:349.86px;font-family:'Liberation Sans', sans-serif;font-size:8px;color:#b4b1d8;transform:scaleX(0.9200);">cellranger</div>
<div class="t s" style="left:576.00px;top:349.86px;font-family:'Liberation Sans', sans-serif;font-size:8px;color:#f0f0f0;transform:scaleX(0.9200);">Translate Spreadsheet Cell Ranges to Rows and Columns</div>
<div class="t s" style="left:950.00px;top:349.86px;font-family:'Liberation Sans', sans-serif;font-size:8px;color:#f0f0f0;transform:scaleX(0.9700);">1.1.0</div>
<div style="left:400.00px;top:371.26px;width:624.00px;height:1.00px;background:#1d2331;"></div>
<div style="left:404.50px;top:362.26px;width:6.60px;height:6.60px;background:#d4d6d8;border-radius:1px"></div>
<div class="t s" style="left:420.80px;top:361.19px;font-family:'Liberation Sans', sans-serif;font-size:8px;color:#b4b1d8;transform:scaleX(0.9200);">chron</div>
<div class="t s" style="left:576.00px;top:361.19px;font-family:'Liberation Sans', sans-serif;font-size:8px;color:#f0f0f0;transform:scaleX(0.9200);">Chronological Objects which Can Handle Dates and Times</div>
<div class="t s" style="left:950.00px;top:361.19px;font-family:'Liberation Sans', sans-serif;font-size:8px;color:#f0f0f0;transform:scaleX(0.9700);">2.3-61</div>
<div style="left:400.00px;top:382.59px;width:624.00px;height:1.00px;background:#1d2331;"></div>
<div style="left:404.50px;top:373.59px;width:6.60px;height:6.60px;background:#d4d6d8;border-radius:1px"></div>
<div class="t s" style="left:420.80px;top:372.52px;font-family:'Liberation Sans', sans-serif;font-size:8px;color:#b4b1d8;transform:scaleX(0.9200);">class</div>
<div class="t s" style="left:576.00px;top:372.52px;font-family:'Liberation Sans', sans-serif;font-size:8px;color:#f0f0f0;transform:scaleX(0.9200);">Functions for Classification</div>
<div class="t s" style="left:950.00px;top:372.52px;font-family:'Liberation Sans', sans-serif;font-size:8px;color:#f0f0f0;transform:scaleX(0.9700);">7.3-22</div>
<div style="left:400.00px;top:393.92px;width:624.00px;height:1.00px;background:#1d2331;"></div>
<div style="left:404.50px;top:384.92px;width:6.60px;height:6.60px;background:#d4d6d8;border-radius:1px"></div>
<div class="t s" style="left:420.80px;top:383.85px;font-family:'Liberation Sans', sans-serif;font-size:8px;color:#b4b1d8;transform:scaleX(0.9200);">cli</div>
<div class="t s" style="left:576.00px;top:383.85px;font-family:'Liberation Sans', sans-serif;font-size:8px;color:#f0f0f0;transform:scaleX(0.9200);">Helpers for Developing Command Line Interfaces</div>
<div class="t s" style="left:950.00px;top:383.85px;font-family:'Liberation Sans', sans-serif;font-size:8px;color:#f0f0f0;transform:scaleX(0.9700);">3.6.3</div>
<div style="left:400.00px;top:405.25px;width:624.00px;height:1.00px;background:#1d2331;"></div>
<div style="left:404.50px;top:396.25px;width:6.60px;height:6.60px;background:#d4d6d8;border-radius:1px"></div>
<div class="t s" style="left:420.80px;top:395.18px;font-family:'Liberation Sans', sans-serif;font-size:8px;color:#b4b1d8;transform:scaleX(0.9200);">clipr</div>
<div class="t s" style="left:576.00px;top:395.18px;font-family:'Liberation Sans', sans-serif;font-size:8px;color:#f0f0f0;transform:scaleX(0.9200);">Read and Write from the System Clipboard</div>
<div class="t s" style="left:950.00px;top:395.18px;font-family:'Liberation Sans', sans-serif;font-size:8px;color:#f0f0f0;transform:scaleX(0.9700);">0.8.0</div>
<div style="left:400.00px;top:416.58px;width:624.00px;height:1.00px;background:#1d2331;"></div>
<div style="left:404.50px;top:407.58px;width:6.60px;height:6.60px;background:#d4d6d8;border-radius:1px"></div>
<div class="t s" style="left:420.80px;top:406.51px;font-family:'Liberation Sans', sans-serif;font-size:8px;color:#b4b1d8;transform:scaleX(0.9200);">clock</div>
<div class="t s" style="left:576.00px;top:406.51px;font-family:'Liberation Sans', sans-serif;font-size:8px;color:#f0f0f0;transform:scaleX(0.9200);">Date-Time Types and Tools</div>
<div class="t s" style="left:950.00px;top:406.51px;font-family:'Liberation Sans', sans-serif;font-size:8px;color:#f0f0f0;transform:scaleX(0.9700);">0.7.1</div>
<div style="left:400.00px;top:427.91px;width:624.00px;height:1.00px;background:#1d2331;"></div>
<div style="left:404.50px;top:418.91px;width:6.60px;height:6.60px;background:#d4d6d8;border-radius:1px"></div>
<div class="t s" style="left:420.80px;top:417.84px;font-family:'Liberation Sans', sans-serif;font-size:8px;color:#b4b1d8;transform:scaleX(0.9200);">cluster</div>
<div class="t s" style="left:576.00px;top:417.84px;font-family:'Liberation Sans', sans-serif;font-size:8px;color:#f0f0f0;transform:scaleX(0.9200);">&quot;Finding Groups in Data&quot;: Cluster Analysis Extended Rousseeuw et al.</div>
<div class="t s" style="left:950.00px;top:417.84px;font-family:'Liberation Sans', sans-serif;font-size:8px;color:#f0f0f0;transform:scaleX(0.9700);">2.1.6</div>
<div style="left:400.00px;top:439.24px;width:624.00px;height:1.00px;background:#1d2331;"></div>
<div style="left:404.50px;top:430.24px;width:6.60px;height:6.60px;background:#d4d6d8;border-radius:1px"></div>
<div class="t s" style="left:420.80px;top:429.17px;font-family:'Liberation Sans', sans-serif;font-size:8px;color:#b4b1d8;transform:scaleX(0.9200);">codetools</div>
<div class="t s" style="left:576.00px;top:429.17px;font-family:'Liberation Sans', sans-serif;font-size:8px;color:#f0f0f0;transform:scaleX(0.9200);">Code Analysis Tools for R</div>
<div class="t s" style="left:950.00px;top:429.17px;font-family:'Liberation Sans', sans-serif;font-size:8px;color:#f0f0f0;transform:scaleX(0.9700);">0.2-20</div>
<div style="left:400.00px;top:450.57px;width:624.00px;height:1.00px;background:#1d2331;"></div>
<div style="left:404.50px;top:441.57px;width:6.60px;height:6.60px;background:#d4d6d8;border-radius:1px"></div>
<div class="t s" style="left:420.80px;top:440.50px;font-family:'Liberation Sans', sans-serif;font-size:8px;color:#b4b1d8;transform:scaleX(0.9200);">colorspace</div>
<div class="t s" style="left:576.00px;top:440.50px;font-family:'Liberation Sans', sans-serif;font-size:8px;color:#f0f0f0;transform:scaleX(0.9200);">A Toolbox for Manipulating and Assessing Colors and Palettes</div>
<div class="t s" style="left:950.00px;top:440.50px;font-family:'Liberation Sans', sans-serif;font-size:8px;color:#f0f0f0;transform:scaleX(0.9700);">2.1-0</div>
<div style="left:400.00px;top:461.90px;width:624.00px;height:1.00px;background:#1d2331;"></div>
<div style="left:404.50px;top:452.90px;width:6.60px;height:6.60px;background:#d4d6d8;border-radius:1px"></div>
<div class="t s" style="left:420.80px;top:451.83px;font-family:'Liberation Sans', sans-serif;font-size:8px;color:#b4b1d8;transform:scaleX(0.9200);">compiler</div>
<div class="t s" style="left:576.00px;top:451.83px;font-family:'Liberation Sans', sans-serif;font-size:8px;color:#f0f0f0;transform:scaleX(0.9200);">The R Compiler Package</div>
<div class="t s" style="left:950.00px;top:451.83px;font-family:'Liberation Sans', sans-serif;font-size:8px;color:#f0f0f0;transform:scaleX(0.9700);">4.4.1</div>
<div style="left:400.00px;top:473.23px;width:624.00px;height:1.00px;background:#1d2331;"></div>
<div style="left:404.50px;top:464.23px;width:6.60px;height:6.60px;background:#d4d6d8;border-radius:1px"></div>
<div class="t s" style="left:420.80px;top:463.16px;font-family:'Liberation Sans', sans-serif;font-size:8px;color:#b4b1d8;transform:scaleX(0.9200);">conflicted</div>
<div class="t s" style="left:576.00px;top:463.16px;font-family:'Liberation Sans', sans-serif;font-size:8px;color:#f0f0f0;transform:scaleX(0.9200);">An Alternative Conflict Resolution Strategy</div>
<div class="t s" style="left:950.00px;top:463.16px;font-family:'Liberation Sans', sans-serif;font-size:8px;color:#f0f0f0;transform:scaleX(0.9700);">1.2.0</div>
<div style="left:400.00px;top:484.56px;width:624.00px;height:1.00px;background:#1d2331;"></div>
<div style="left:404.50px;top:475.56px;width:6.60px;height:6.60px;background:#d4d6d8;border-radius:1px"></div>
<div class="t s" style="left:420.80px;top:474.49px;font-family:'Liberation Sans', sans-serif;font-size:8px;color:#b4b1d8;transform:scaleX(0.9200);">cpp11</div>
<div class="t s" style="left:576.00px;top:474.49px;font-family:'Liberation Sans', sans-serif;font-size:8px;color:#f0f0f0;transform:scaleX(0.9200);">A C++11 Interface for R&#x27;s C Interface</div>
<div class="t s" style="left:950.00px;top:474.49px;font-family:'Liberation Sans', sans-serif;font-size:8px;color:#f0f0f0;transform:scaleX(0.9700);">0.4.7</div>
<div style="left:400.00px;top:495.89px;width:624.00px;height:1.00px;background:#1d2331;"></div>
<div style="left:404.50px;top:486.89px;width:6.60px;height:6.60px;background:#d4d6d8;border-radius:1px"></div>
<div class="t s" style="left:420.80px;top:485.82px;font-family:'Liberation Sans', sans-serif;font-size:8px;color:#b4b1d8;transform:scaleX(0.9200);">crayon</div>
<div class="t s" style="left:576.00px;top:485.82px;font-family:'Liberation Sans', sans-serif;font-size:8px;color:#f0f0f0;transform:scaleX(0.9200);">Colored Terminal Output</div>
<div class="t s" style="left:950.00px;top:485.82px;font-family:'Liberation Sans', sans-serif;font-size:8px;color:#f0f0f0;transform:scaleX(0.9700);">1.5.3</div>
<div style="left:400.00px;top:507.22px;width:624.00px;height:1.00px;background:#1d2331;"></div>
<div style="left:404.50px;top:498.22px;width:6.60px;height:6.60px;background:#d4d6d8;border-radius:1px"></div>
<div class="t s" style="left:420.80px;top:497.15px;font-family:'Liberation Sans', sans-serif;font-size:8px;color:#b4b1d8;transform:scaleX(0.9200);">curl</div>
<div class="t s" style="left:576.00px;top:497.15px;font-family:'Liberation Sans', sans-serif;font-size:8px;color:#f0f0f0;transform:scaleX(0.9200);">A Modern and Flexible Web Client for R</div>
<div class="t s" style="left:950.00px;top:497.15px;font-family:'Liberation Sans', sans-serif;font-size:8px;color:#f0f0f0;transform:scaleX(0.9700);">5.2.1</div>
<div style="left:400.00px;top:518.55px;width:624.00px;height:1.00px;background:#1d2331;"></div>
<div style="left:404.50px;top:509.55px;width:6.60px;height:6.60px;background:#d4d6d8;border-radius:1px"></div>
<div class="t s" style="left:420.80px;top:508.48px;font-family:'Liberation Sans', sans-serif;font-size:8px;color:#b4b1d8;transform:scaleX(0.9200);">data.table</div>
<div class="t s" style="left:576.00px;top:508.48px;font-family:'Liberation Sans', sans-serif;font-size:8px;color:#f0f0f0;transform:scaleX(0.9200);">Extension of `data.frame`</div>
<div class="t s" style="left:950.00px;top:508.48px;font-family:'Liberation Sans', sans-serif;font-size:8px;color:#f0f0f0;transform:scaleX(0.9700);">1.15.4</div>
<div style="left:400.00px;top:529.88px;width:624.00px;height:1.00px;background:#1d2331;"></div>
<div style="left:404.50px;top:520.88px;width:6.60px;height:6.60px;background:#d4d6d8;border-radius:1px"></div>
<svg style="position:absolute;left:405px;top:520.88px" width="6" height="6" viewBox="0 0 6 6"><path d="M1 3.2 L2.4 4.8 L5.2 0.8" stroke="#202020" stroke-width="1" fill="none"/></svg>
<div class="t s" style="left:420.80px;top:519.81px;font-family:'Liberation Sans', sans-serif;font-size:8px;color:#b4b1d8;transform:scaleX(0.9200);">datasets</div>
<div class="t s" style="left:576.00px;top:519.81px;font-family:'Liberation Sans', sans-serif;font-size:8px;color:#f0f0f0;transform:scaleX(0.9200);">The R Datasets Package</div>
<div class="t s" style="left:950.00px;top:519.81px;font-family:'Liberation Sans', sans-serif;font-size:8px;color:#f0f0f0;transform:scaleX(0.9700);">4.4.1</div>
</div>
</body></html>
